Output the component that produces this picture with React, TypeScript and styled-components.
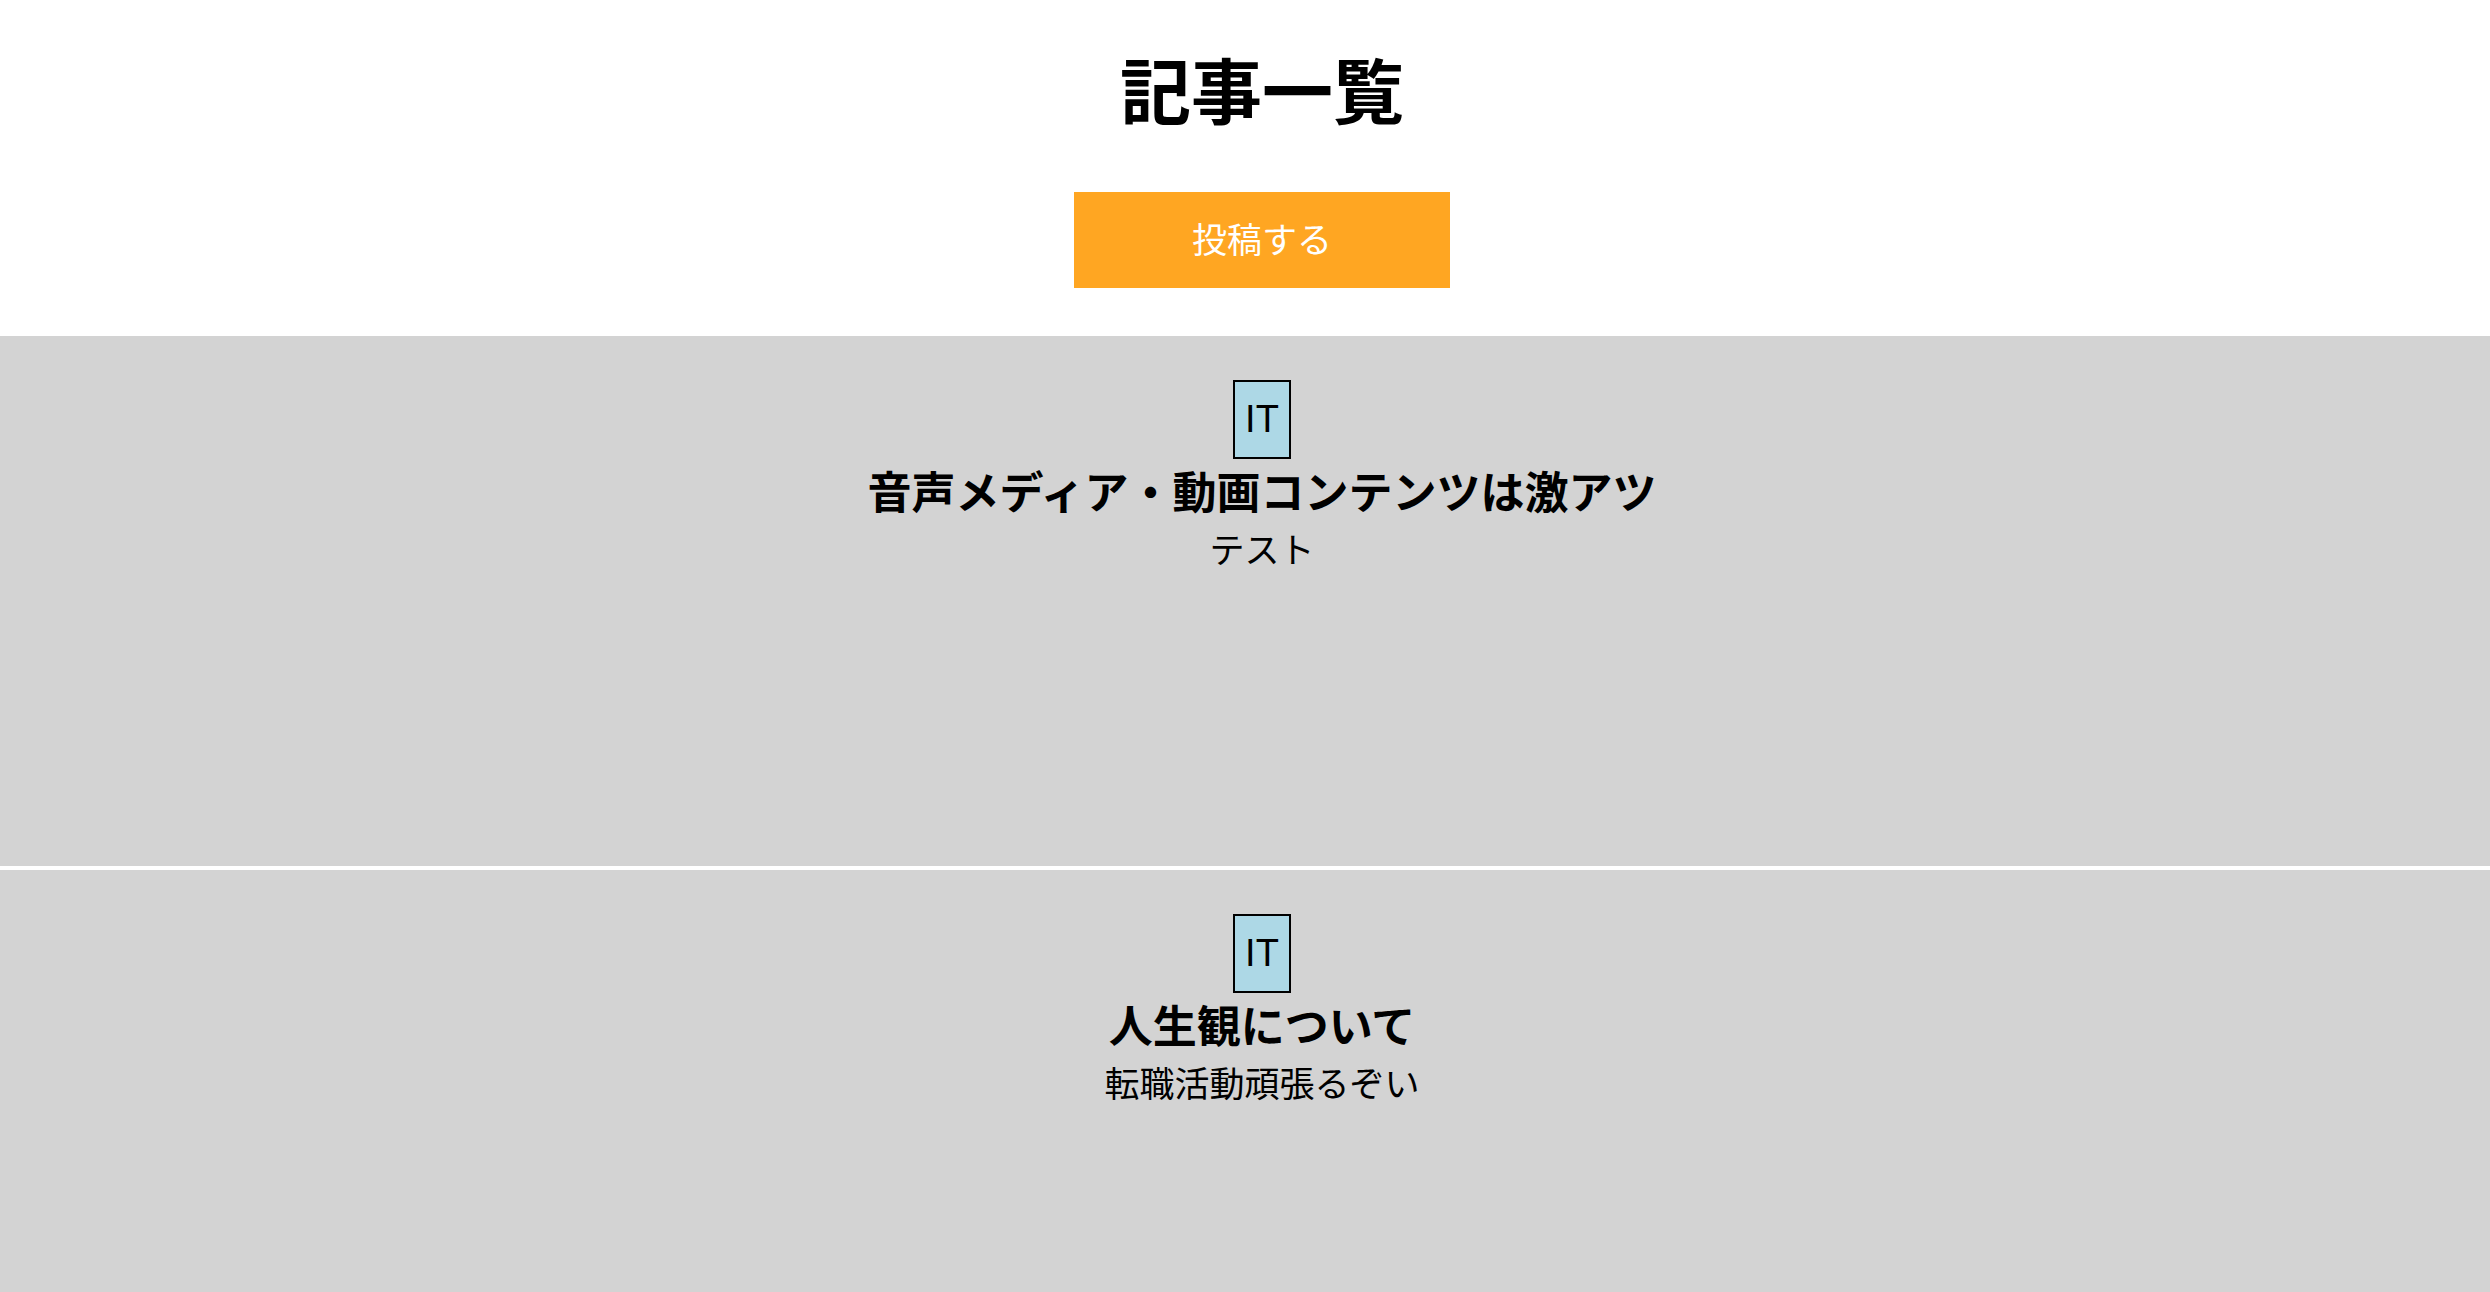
import React from "react";
import styled, { createGlobalStyle } from "styled-components";

const GlobalStyle = createGlobalStyle`
  html, body {
    margin: 0;
    padding: 0;
    background: #ffffff;
    font-family: "Noto Sans CJK JP", "Noto Sans", sans-serif;
    color: #000000;
  }
`;

const Page = styled.div`
  display: flex;
  flex-direction: column;
  min-height: 1292px;
`;

const Header = styled.header`
  display: flex;
  flex-direction: column;
  align-items: center;
  padding: 36px 0 48px 34px;
`;

const PageTitle = styled.h1`
  margin: 0;
  font-size: 71px;
  line-height: 103px;
  font-weight: 700;
`;

const PostButton = styled.button`
  margin-top: 53px;
  width: 376px;
  height: 96px;
  padding: 0 0 5px 0;
  border: none;
  border-radius: 0;
  background: #ffa622;
  color: #ffffff;
  font-family: "Noto Sans CJK JP", "Noto Sans", sans-serif;
  font-size: 35px;
  font-weight: 400;
  display: flex;
  align-items: center;
  justify-content: center;
  cursor: pointer;
`;

const ArticleList = styled.section`
  display: flex;
  flex-direction: column;
  gap: 4px;
`;

const ArticleCard = styled.article`
  background: #d3d3d3;
  height: 530px;
  display: flex;
  flex-direction: column;
  align-items: center;
  padding: 44px 0 0 34px;
  box-sizing: border-box;
  text-align: center;
`;

const Tag = styled.span`
  display: inline-block;
  background: #add8e6;
  border: 2px solid #000000;
  padding: 16px 10px;
  font-family: "Liberation Sans", Arial, sans-serif;
  font-size: 38px;
  line-height: 43px;
`;

const ArticleTitle = styled.h2`
  margin: 0;
  font-size: 44px;
  font-weight: 700;
  line-height: 62px;
`;

const ArticleBody = styled.p`
  margin: 0;
  font-size: 35px;
  line-height: 53px;
`;

type Article = { tag: string; title: string; body: string };

const articles: Article[] = [
  { tag: "IT", title: "音声メディア・動画コンテンツは激アツ", body: "テスト" },
  { tag: "IT", title: "人生観について", body: "転職活動頑張るぞい" },
];

export default function App() {
  return (
    <>
      <GlobalStyle />
      <Page>
        <Header>
          <PageTitle>記事一覧</PageTitle>
          <PostButton>投稿する</PostButton>
        </Header>
        <ArticleList>
          {articles.map((a, i) => (
            <ArticleCard key={i}>
              <Tag>{a.tag}</Tag>
              <ArticleTitle>{a.title}</ArticleTitle>
              <ArticleBody>{a.body}</ArticleBody>
            </ArticleCard>
          ))}
        </ArticleList>
      </Page>
    </>
  );
}
